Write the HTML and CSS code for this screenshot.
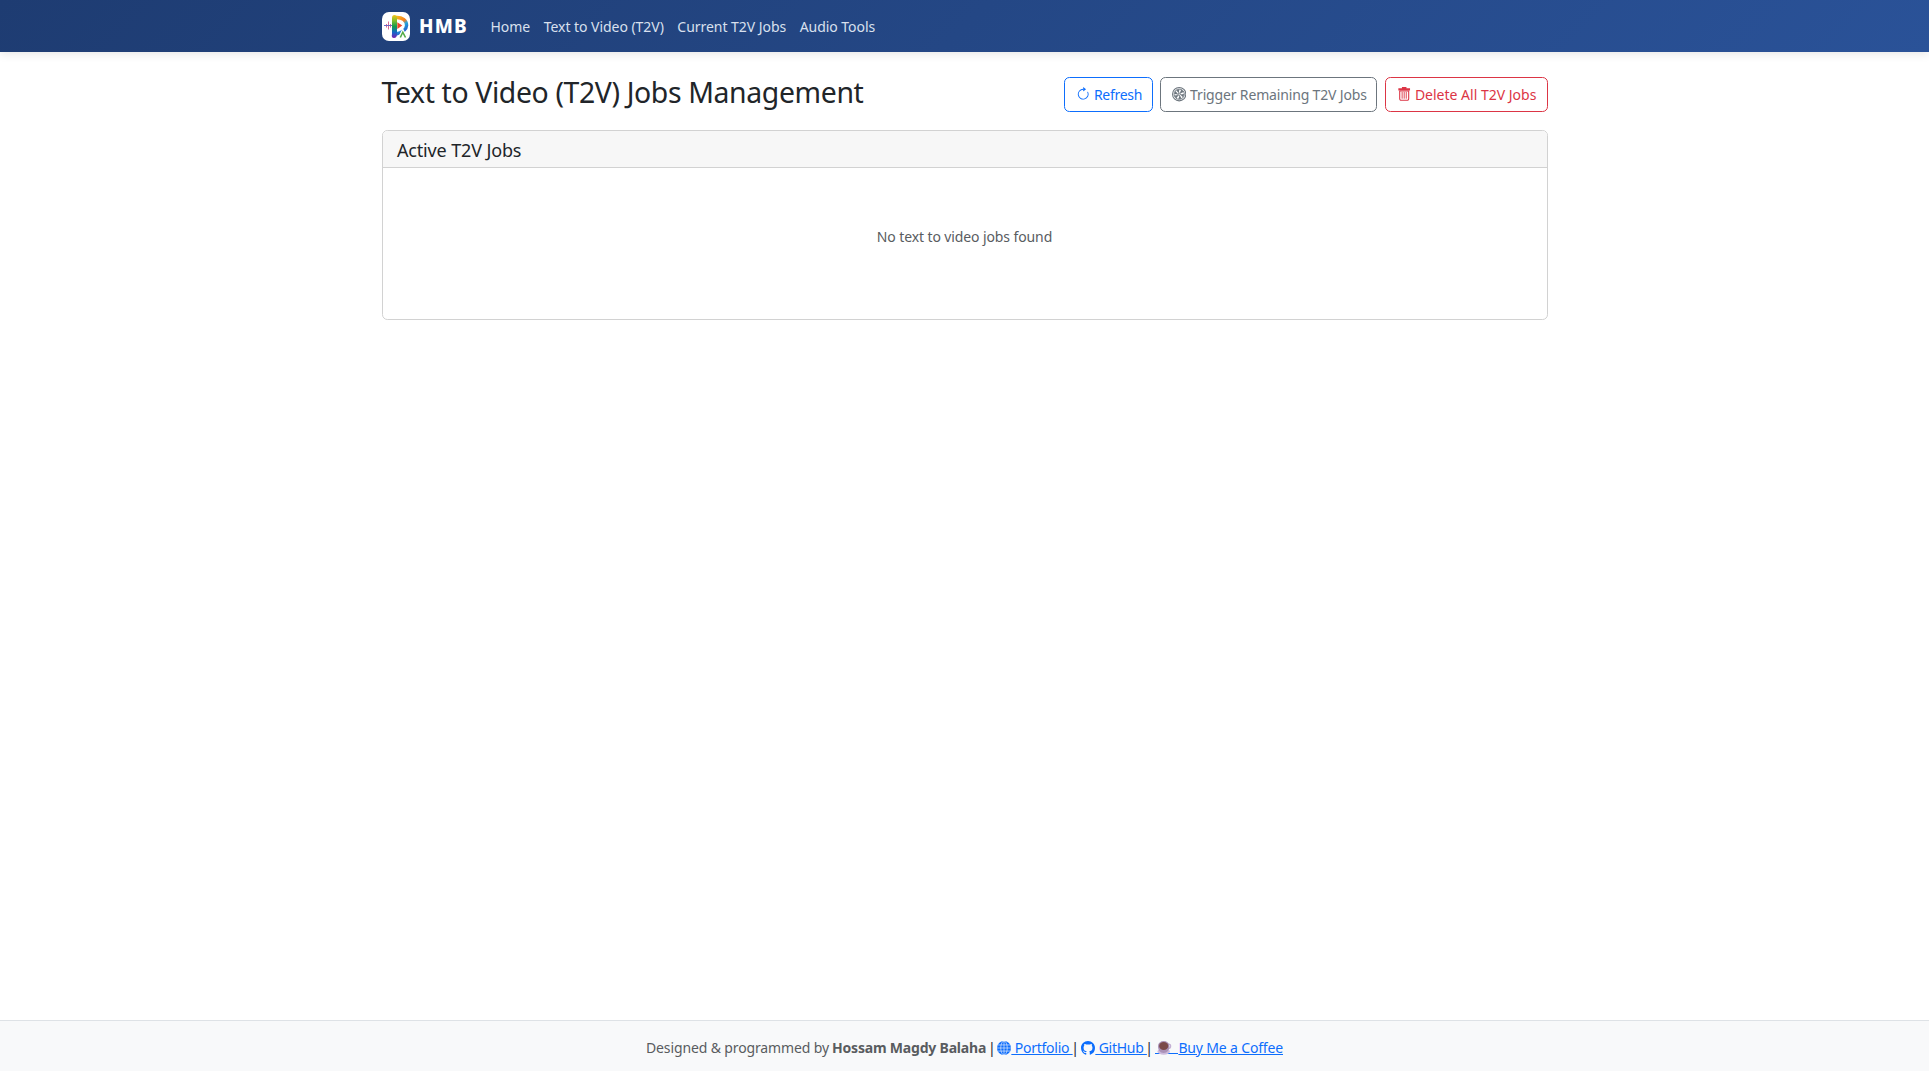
FILE: index.html
```html
<!DOCTYPE html>
<html lang="en">
<head>
<meta charset="utf-8">
<title>Text to Video (T2V) Jobs Management</title>
<link rel="stylesheet" href="styles.css">
</head>
<body>
<header class="navbar">
  <div class="container navbar-inner">
    <a class="brand" href="#">
      <svg class="brand-logo" viewBox="0 0 28 29" aria-hidden="true">
        <defs>
          <linearGradient id="stem" x1="0" y1="0" x2="0" y2="1"><stop offset="0" stop-color="#f3c21c"/><stop offset=".22" stop-color="#8fbf28"/><stop offset=".5" stop-color="#149b4d"/><stop offset=".75" stop-color="#1468c8"/><stop offset="1" stop-color="#7b20b0"/></linearGradient>
          <linearGradient id="bowl" x1="0" y1="0" x2=".5" y2="1"><stop offset="0" stop-color="#f9b61a"/><stop offset=".45" stop-color="#f47b20"/><stop offset=".65" stop-color="#25a4dc"/><stop offset="1" stop-color="#2460cc"/></linearGradient>
        </defs>
        <rect width="28" height="29" rx="7" fill="#fff"/>
        <path d="M14 5.500C20 5 24.600 8.500 24.600 13.500 24.300 18 20 20.500 14 22" fill="none" stroke="url(#bowl)" stroke-width="3.400"/>
        <path d="M10 6Q10 3 12.500 3T15 5.500V22Q15 26 12 26T10 22Z" fill="url(#stem)"/>
        <path d="M15.300 10.200l5 3.300-5 3.500z" fill="#ee4328"/>
        <path d="M4.500 12v3.500M6.500 9.500v8M8.500 12v3.500" stroke="#d45a86" stroke-width=".9"/>
        <path d="M2 13.500h8" stroke="#6d67c5" stroke-width="1"/>
        <path d="M17.700 25.500l3.100-6 3.200 6" fill="none" stroke="#fff" stroke-width="3.200"/>
        <path d="M18.300 25.500l2.500-5.300 2.700 5.300" fill="none" stroke="#54ab48" stroke-width="1.600"/>
      </svg>
      <span class="brand-name">HMB</span>
    </a>
    <nav class="nav">
      <a href="#">Home</a>
      <a href="#">Text to Video (T2V)</a>
      <a href="#">Current T2V Jobs</a>
      <a href="#">Audio Tools</a>
    </nav>
  </div>
</header>
<main class="container main">
  <div class="page-head">
    <h1>Text to Video (T2V) Jobs Management</h1>
    <div class="actions">
      <button class="btn btn-refresh"><svg viewBox="0 0 16 16"><path fill-rule="evenodd" d="M8 3a5 5 0 1 0 4.546 2.914.5.5 0 0 1 .908-.417A6 6 0 1 1 8 2z"/><path d="M8 4.466V.534a.25.25 0 0 1 .41-.192l2.360 1.966c.12.1.12.284 0 .384L8.410 4.658A.25.25 0 0 1 8 4.466"/></svg><span>Refresh</span></button>
      <button class="btn btn-trigger"><svg viewBox="0 0 16 16"><g fill="none" stroke="currentColor"><circle cx="8" cy="8" r="7.400" stroke-width="1.200"/><circle cx="8" cy="8" r="5.700"/><circle cx="8" cy="8" r="1.300"/></g><path d="M7.500 7L4.800 3.500 8.300 2.300zM8.700 7.200l1.500-4.300 2.900 2.700zM9 8.200l4.500-.3-1.200 3.600zM8.500 9l2.200 4-3.600.4zM7.500 9l-2.800 3.600-2-3.100zM7 8.200l-4.500-.5 1.300-3.300z"/></svg><span>Trigger Remaining T2V Jobs</span></button>
      <button class="btn btn-delete"><svg viewBox="0 0 16 16"><path d="M5.500 0h5v1.500H14.500v2.300H1.500V1.500h4z"/><path d="M3 4.500h10v8.700a1.500 1.500 0 0 1-1.500 1.500h-7A1.500 1.500 0 0 1 3 13.200z" fill="none" stroke="currentColor" stroke-width="1.200"/><path d="M5.700 5.500v7.500M8 5.500v7.500M10.300 5.500v7.500" stroke="currentColor" stroke-width="1"/></svg><span>Delete All T2V Jobs</span></button>
    </div>
  </div>
  <section class="card">
    <div class="card-header"><h2>Active T2V Jobs</h2></div>
    <div class="card-body"><p>No text to video jobs found</p></div>
  </section>
</main>
<footer class="footer">
  <span class="credit">Designed &amp; programmed by</span>
  <strong>Hossam Magdy Balaha</strong>
  <span class="sep">|</span>
  <a class="link-portfolio" href="#"><svg viewBox="0 0 16 16"><circle cx="8" cy="8" r="8" fill="currentColor"/><g fill="none" stroke="#f8f9fa" stroke-width=".7"><ellipse cx="8" cy="8" rx="3.700" ry="8"/><path d="M8 0v16M0 8h16M1 4.500h14M1 11.500h14"/></g></svg><span> Portfolio </span></a>
  <span class="sep">|</span>
  <a class="link-github" href="#"><svg viewBox="0 0 16 16"><path fill="currentColor" d="M8 0C3.580 0 0 3.580 0 8c0 3.540 2.290 6.530 5.470 7.590.4.070.55-.17.55-.38 0-.19-.01-.82-.01-1.490-2.010.37-2.530-.49-2.690-.94-.09-.23-.48-.94-.82-1.130-.28-.15-.68-.52-.01-.53.63-.01 1.080.58 1.230.82.72 1.210 1.870.87 2.330.66.07-.52.28-.87.51-1.070-1.780-.2-3.640-.89-3.640-3.950 0-.87.31-1.590.82-2.150-.08-.2-.36-1.020.08-2.120 0 0 .67-.21 2.200.82.64-.18 1.320-.27 2-.27s1.360.09 2 .27c1.530-1.040 2.200-.82 2.200-.82.44 1.100.16 1.920.08 2.120.51.56.82 1.270.82 2.150 0 3.070-1.870 3.750-3.650 3.950.29.25.54.73.54 1.480 0 1.070-.01 1.930-.01 2.200 0 .21.15.46.55.38A8.010 8.010 0 0 0 16 8c0-4.420-3.580-8-8-8"/></svg><span> GitHub </span></a>
  <span class="sep">|</span>
  <a class="link-coffee" href="#"><svg viewBox="0 0 23 16"><path d="M0 13.500h23" stroke="#0d6efd"/><ellipse cx="8.700" cy="11.500" rx="6.200" ry="3.300" fill="#cdbbdc"/><path d="M13 4.500c3.500-1.500 3.500 4 0 4" fill="none" stroke="#c3b0d4" stroke-width="1.300"/><path d="M3 6a5.700 5 0 0 1 11.400 0c0 4-2 7-5.700 7S3 10 3 6z" fill="#ab92b8"/><ellipse cx="8.700" cy="6" rx="4.600" ry="4" fill="#7b4a4a"/></svg><span>Buy Me a Coffee</span></a>
</footer>
</body>
</html>
```
FILE: styles.css
```css
* {
  box-sizing: border-box;
}

body {
  margin: 0;
  min-height: 100vh;
  display: flex;
  flex-direction: column;
  font: 14px/21.600px "Noto Sans", "Open Sans", sans-serif;
  color: #212529;
  background: #fff;
}

.container {
  width: 1166px;
  margin: 0 auto;
}

.navbar {
  height: 52px;
  background: linear-gradient(135deg, #1e3c72, #2a5298);
  box-shadow: 0 2px 9px rgba(0, 0, 0, .1);
}

.navbar-inner {
  display: flex;
  align-items: center;
  height: 52px;
}

.brand,
.nav {
  display: flex;
  align-items: center;
}

.brand {
  width: 109px;
  padding-top: 1px;
  color: #fff;
  text-decoration: none;
}

.brand-logo {
  width: 28px;
  height: 29px;
}

.brand-name {
  margin-left: 9.400px;
  font-size: 19px;
  font-weight: 800;
  letter-spacing: 1.200px;
}

.nav {
  gap: 13.500px;
  padding-top: 1px;
}

.nav a {
  color: #d9e0ee;
  text-decoration: none;
  letter-spacing: -.04px;
}

.main {
  flex: 1;
}

.page-head {
  display: flex;
  justify-content: space-between;
  height: 78px;
  padding-top: 25px;
}

h1,
h2,
p {
  margin: 0;
  font-weight: 400;
}

h1 {
  margin-top: -1px;
  font-size: 28.400px;
  line-height: 32px;
  letter-spacing: -.37px;
}

.actions {
  display: flex;
  gap: 7.200px;
}

.btn {
  display: flex;
  align-items: center;
  height: 35px;
  padding: 0 0 0 11px;
  border: 1px solid currentColor;
  border-radius: 5.400px;
  background: none;
  font: inherit;
  white-space: nowrap;
}

.btn svg {
  flex: none;
  width: 14.400px;
  height: 14.400px;
  margin-right: 4px;
  fill: currentColor;
}

.btn-refresh {
  width: 89px;
  color: #0d6efd;
  letter-spacing: -.3px;
}

.btn-trigger {
  width: 217.600px;
  color: #6c757d;
  letter-spacing: -.16px;
}

.btn-delete {
  width: 163px;
  color: #dc3545;
}

.card {
  height: 190px;
  border: 1px solid #d2d2d2;
  border-radius: 5.400px;
  overflow: hidden;
}

.card-header {
  height: 37px;
  padding: 7px 14.400px 0;
  border-bottom: 1px solid #d2d2d2;
  background: #f7f7f7;
}

h2 {
  font-size: 18px;
  line-height: 24px;
  letter-spacing: -.14px;
}

.card-body {
  padding-top: 58px;
  color: #595c5f;
  text-align: center;
  letter-spacing: -.11px;
}

.footer {
  display: flex;
  align-items: center;
  justify-content: center;
  height: 51px;
  padding-top: 3px;
  border-top: 1px solid #dee2e6;
  background: #f8f9fa;
  color: #595c5f;
  white-space: pre;
}

.footer a {
  display: flex;
  align-items: center;
  color: #0d6efd;
  text-decoration: none;
}

.footer a span {
  text-decoration: underline;
  text-decoration-thickness: 1px;
  text-underline-offset: 1px;
}

.footer svg {
  width: 14px;
  height: 14px;
}

.credit {
  letter-spacing: -.13px;
}

.footer strong {
  margin: 0 1.800px 0 3.100px;
  font-weight: 700;
  letter-spacing: -.2px;
}

.sep {
  color: #212529;
}

.footer .link-portfolio {
  margin: 0 -1.300px 0 1.700px;
  letter-spacing: -.25px;
}

.footer .link-github {
  margin: 0 -1.600px 0 1.600px;
  letter-spacing: -.28px;
}

.link-github span {
  margin-left: .700px;
}

.footer .link-coffee {
  margin-left: 2.400px;
  letter-spacing: -.16px;
}

.footer .link-coffee svg {
  width: 23px;
  height: 16px;
}
```
